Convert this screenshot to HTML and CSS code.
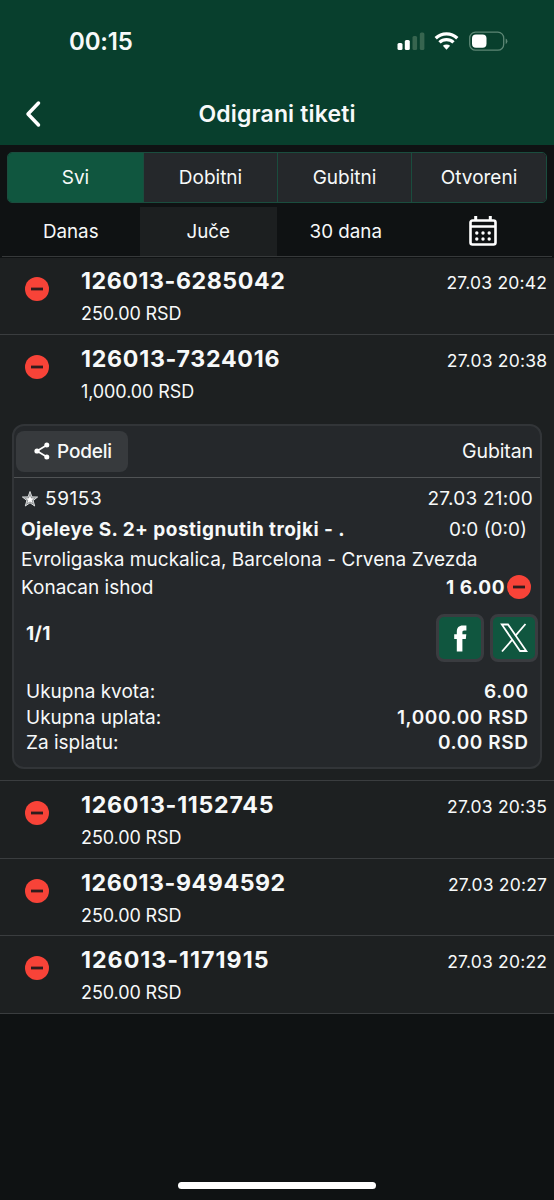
FILE: index.html
```html
<!DOCTYPE html>
<html lang="sr">
<head>
<meta charset="utf-8">
<title>Odigrani tiketi</title>
<link rel="stylesheet" href="styles.css">
</head>
<body>
<svg class="defs" width="0" height="0">
  <symbol id="lost" viewBox="0 0 24 24"><circle cx="12" cy="12" r="12" fill="#f84338"/><rect x="6" y="10.6" width="12" height="2.8" fill="#301c1d"/></symbol>
</svg>
<div class="screen">
  <header class="top">
    <div class="status">
      <span class="clock">00:15</span>
      <svg class="status-icons" width="114" height="24" viewBox="0 0 114 24">
        <g fill="#fff"><rect x="1.500" y="14" width="5" height="7" rx="1.500"/><rect x="8.800" y="11" width="5" height="10" rx="1.500"/></g>
        <g fill="#37654f"><rect x="16.500" y="7" width="4.600" height="14" rx="1.500"/><rect x="23.800" y="3.500" width="4.600" height="17.500" rx="1.500"/></g>
        <g fill="none" stroke="#fff" stroke-width="3.300"><path d="M39.700 9.300a15.600 15.600 0 0 1 21.600 0"/><path d="M43.500 13.400a10 10 0 0 1 14 0"/></g>
        <path d="M46.900 16.800a5.300 5.300 0 0 1 7.200 0L50.500 20.800z" fill="#fff"/>
        <rect x="73.700" y="3.200" width="34" height="18" rx="5.800" fill="none" stroke="#5c8674" stroke-width="1.300"/>
        <rect x="76" y="5.500" width="14.500" height="13.300" rx="4" fill="#fff"/>
        <path d="M109.700 9.500q1.700.8 1.700 2.800t-1.700 2.800z" fill="#5c8674"/>
      </svg>
    </div>
    <div class="nav">
      <svg class="back" width="16" height="28" viewBox="0 0 16 28"><path d="M13.500 3L3 14l10.500 11" fill="none" stroke="#fff" stroke-width="3.500" stroke-linecap="round" stroke-linejoin="round"/></svg>
      <h1 class="heading">Odigrani tiketi</h1>
    </div>
  </header>

  <nav class="tabs">
    <div class="tab tab-on">Svi</div><div class="tab">Dobitni</div><div class="tab">Gubitni</div><div class="tab">Otvoreni</div>
  </nav>
  <nav class="days">
    <div class="day">Danas</div><div class="day day-on">Juče</div><div class="day">30 dana</div>
    <div class="day"><svg class="calendar" width="28" height="32" viewBox="0 0 28 32"><path d="M3.500 5.500h21a2 2 0 0 1 2 2v20a2 2 0 0 1-2 2h-21a2 2 0 0 1-2-2v-20a2 2 0 0 1 2-2zM1.500 11.500h25" fill="none" stroke="#fff" stroke-width="2.600"/><path d="M6.700 1v4M21.300 1v4" stroke="#fff" stroke-width="3"/><g fill="#fff"><circle cx="7.800" cy="18" r="1.700"/><circle cx="14" cy="18" r="1.700"/><circle cx="20.200" cy="18" r="1.700"/><circle cx="7.800" cy="24" r="1.700"/><circle cx="14" cy="24" r="1.700"/><circle cx="20.200" cy="24" r="1.700"/></g></svg></div>
  </nav>

  <main class="list">
    <section class="ticket ticket-first">
      <svg class="mark"><use href="#lost"/></svg>
      <div class="info"><div class="code">126013-6285042</div><div class="stake">250.00 RSD</div></div>
      <time class="when">27.03 20:42</time>
    </section>
    <section class="ticket ticket-open">
      <svg class="mark"><use href="#lost"/></svg>
      <div class="info"><div class="code code-wide">126013-7324016</div><div class="stake">1,000.00 RSD</div></div>
      <time class="when">27.03 20:38</time>
    </section>
    <article class="card">
      <div class="card-head">
        <div class="share"><svg width="16" height="18" viewBox="0 0 16 18"><path d="M13 3L3 9l10 6" fill="none" stroke="#fff" stroke-width="1.700"/><g fill="#fff"><circle cx="12.800" cy="3" r="2.500"/><circle cx="3" cy="9" r="2.600"/><circle cx="12.800" cy="15" r="2.500"/></g></svg><span>Podeli</span></div>
        <span class="outcome">Gubitan</span>
      </div>
      <div class="line line-id">
        <span class="event"><svg width="18" height="18" viewBox="0 0 18 18"><path d="M9 1.500l1.900 5.400 5.700.1-4.500 3.500 1.600 5.500L9 12.800 4.300 16l1.600-5.500L1.400 7l5.700-.1z" fill="#8e9192" stroke="#d9dcdd" stroke-width="1"/><path d="M9 5.500l1.100 2.800 3 .1-2.400 1.800.9 2.900L9 11.500l-2.600 1.600.9-2.900-2.400-1.800 3-.1z" fill="#fff"/></svg><span class="event-id">59153</span></span>
        <span class="event-time">27.03 21:00</span>
      </div>
      <div class="line line-pick"><b class="pick">Ojeleye S. 2+ postignutih trojki - .</b><span class="score">0:0 (0:0)</span></div>
      <div class="line line-match"><span class="match">Evroligaska muckalica, Barcelona - Crvena Zvezda</span></div>
      <div class="line line-odds"><span class="market">Konacan ishod</span><span class="odds"><b>1 6.00</b><svg class="mark-small"><use href="#lost"/></svg></span></div>
      <div class="social">
        <b class="count">1/1</b>
        <div class="buttons">
          <div class="button"><svg width="40" height="40" viewBox="0 0 40 40"><path d="M16.800 33.500V21h-2.600v-4.700h2.600v-2.500c0-4 2-6.200 6-6.200h3.600v4.900h-2.100c-1.500 0-1.900.7-1.900 2v1.800h3.900l-.5 4.700h-3.400v12.500z" fill="#fff"/></svg></div>
          <div class="button"><svg width="40" height="40" viewBox="0 0 40 40"><g fill="none" stroke="#fff" stroke-width="1.800"><path d="M7.800 6.500h6.200L32.300 33h-6.200z"/><path d="M31.500 6L21.300 17.800M18.300 21.600L8 33.500"/></g></svg></div>
        </div>
      </div>
      <dl class="totals">
        <div class="total"><dt>Ukupna kvota:</dt><dd>6.00</dd></div>
        <div class="total"><dt>Ukupna uplata:</dt><dd>1,000.00 RSD</dd></div>
        <div class="total"><dt>Za isplatu:</dt><dd>0.00 RSD</dd></div>
      </dl>
    </article>
    <section class="ticket ticket-after">
      <svg class="mark"><use href="#lost"/></svg>
      <div class="info"><div class="code code-wide">126013-1152745</div><div class="stake">250.00 RSD</div></div>
      <time class="when">27.03 20:35</time>
    </section>
    <section class="ticket ticket-short">
      <svg class="mark"><use href="#lost"/></svg>
      <div class="info"><div class="code">126013-9494592</div><div class="stake">250.00 RSD</div></div>
      <time class="when">27.03 20:27</time>
    </section>
    <section class="ticket">
      <svg class="mark"><use href="#lost"/></svg>
      <div class="info"><div class="code code-widest">126013-1171915</div><div class="stake">250.00 RSD</div></div>
      <time class="when">27.03 20:22</time>
    </section>
  </main>
  <div class="home"></div>
</div>
</body>
</html>
```
FILE: styles.css
```css
* { box-sizing: border-box; margin: 0; padding: 0; }
body { background: #0f1213; color: #f7f9f9; font-family: Inter, "Liberation Sans", sans-serif; font-size: 19px; overflow: hidden; }
.defs { position: absolute; }
.screen { width: 554px; height: 1200px; display: flex; flex-direction: column; overflow: hidden; }
.top { height: 145px; background: #083f2d; flex: none; }
.status { height: 83px; padding: 0 44px 0 69px; display: flex; align-items: center; justify-content: space-between; }
.clock { font-size: 24px; font-weight: 600; letter-spacing: -0.2px; }
.status-icons { margin-top: -1px; }
.nav { height: 62px; display: grid; grid-template-columns: 1fr auto 1fr; align-items: center; padding: 0 25px; }
.heading { font-size: 23px; font-weight: 600; letter-spacing: 0.15px; }
.tabs { flex: none; width: 540px; height: 51px; margin: 7px 0 0 7px; display: grid; grid-template-columns: 135px 134px 134px 1fr; border: 1.500px solid #1a4d3e; border-radius: 5px; overflow: hidden; }
.tab { display: flex; align-items: center; justify-content: center; background: #25282b; font-size: 19px; }
.tab + .tab { border-left: 1px solid #1a4d3e; }
.tab-on { background: #10563f; }
.days { flex: none; height: 54px; margin: 0 2px; padding-top: 4px; display: grid; grid-template-columns: repeat(4, 1fr); border-bottom: 1px solid #36393a; }
.day { display: flex; align-items: center; justify-content: center; font-size: 18.800px; }
.calendar { margin-top: -2px; }
.day-on { background: #1c1f20; }
.list { flex: none; margin-top: 1px; background: #1d2021; }
.ticket { height: 78px; border-bottom: 1px solid #3a3d3f; display: flex; padding: 1px 7px 0 25px; }
.ticket-first { height: 77px; padding-top: 0; }
.ticket-short { height: 77px; }
.mark { width: 24px; height: 24px; margin-top: 19px; flex: none; }
.info { margin-left: 32px; flex: 1; }
.code { font-size: 23.200px; font-weight: 700; line-height: 28px; margin-top: 9px; letter-spacing: 0.550px; white-space: nowrap; }
.code-wide { letter-spacing: 0.720px; }
.code-widest { letter-spacing: 1px; }
.stake { font-size: 18px; line-height: 22px; margin-top: 8px; letter-spacing: -0.100px; }
.when { font-size: 17.500px; line-height: 22px; margin-top: 14px; letter-spacing: 0.200px; margin-right: -0.200px; }
.ticket-open { border-bottom: 0; height: 89px; }
.card { height: 345px; margin: 0 12px; border: 2px solid #323538; border-radius: 12px; background: #25282b; }
.card-head { height: 52px; padding: 4px 7px 5px 2px; border-bottom: 1px solid #505355; display: flex; justify-content: space-between; align-items: center; font-size: 19px; }
.share { width: 112px; height: 41px; border-radius: 8px; background: #373a3d; display: flex; align-items: center; justify-content: center; gap: 7px; font-weight: 500; letter-spacing: -0.200px; }
.share svg { margin-left: 2px; }
.outcome { font-size: 19.500px; letter-spacing: -0.100px; }
.line { display: flex; justify-content: space-between; align-items: center; padding: 0 7px; white-space: nowrap; }
.line-id { height: 31px; margin-top: 5px; }
.event { display: flex; align-items: center; gap: 6px; }
.event-id { letter-spacing: 0.600px; }
.event-time { letter-spacing: 0.250px; }
.line-pick { height: 30px; padding-right: 13px; }
.pick { letter-spacing: 0.440px; }
.line-match { height: 31px; }
.match { letter-spacing: 0.040px; }
.line-odds { height: 24px; padding-right: 9px; }
.odds { display: flex; align-items: center; gap: 2px; letter-spacing: 0.500px; }
.mark-small { width: 24px; height: 24px; }
.social { height: 77px; padding: 15px 2px 0 12px; display: flex; justify-content: space-between; }
.count { margin-top: 8px; letter-spacing: 0.300px; }
.buttons { display: flex; gap: 6px; }
.button { width: 48px; height: 48px; border: 3px solid #3a3c40; border-radius: 8px; background: #10563f; display: flex; align-items: center; justify-content: center; }
.totals { padding: 3px 12px 0; }
.total { height: 25.500px; display: flex; align-items: center; justify-content: space-between; }
.total dd { font-weight: 600; letter-spacing: 0.600px; margin-right: -0.600px; }
.ticket-after { height: 79px; margin-top: 11px; border-top: 1px solid #3a3d3f; }
.home { flex: none; width: 198px; height: 7px; margin: 168px 0 0 178px; border-radius: 4px; background: #fff; }
```
